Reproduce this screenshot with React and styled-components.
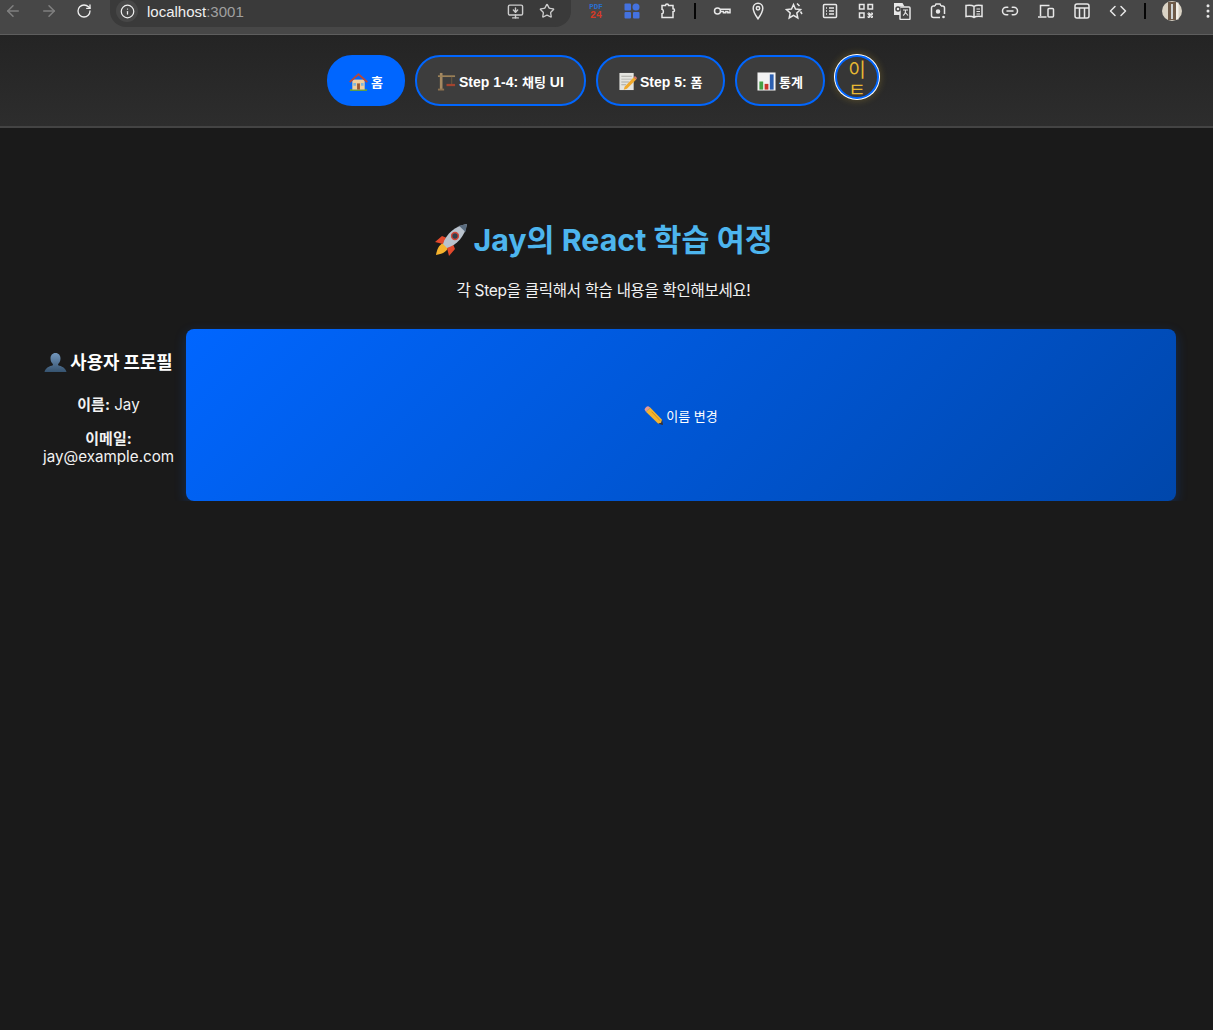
import React from "react";
import styled, { createGlobalStyle } from "styled-components";
import {
  ArrowLeft,
  ArrowRight,
  RotateCw,
  Info,
  MonitorDown,
  Star,
  Link2,
  Code,
  EllipsisVertical,
} from "lucide-react";

const GlobalStyle = createGlobalStyle`
  html, body {
    margin: 0;
    padding: 0;
    background: #1a1a1a;
  }
  body {
    font-family: Inter, "Noto Sans CJK KR", sans-serif;
    color: #fff;
  }
`;

// Emoji drawings, no colour emoji font is installed
const HouseEmoji = () => (
  <Emoji viewBox="0 0 20 20">
    <path d="M1 18h18v2H1z" fill="#5f9e45" />
    <path d="M3.500 8h13v10.500h-13z" fill="#efcf9f" />
    <path d="M0 10 10 1l10 9-1.500 1.300L10 3.800 1.500 11.300z" fill="#b5483a" />
    <path d="M8.500 12h3v6.500h-3z" fill="#9a5a34" />
    <path d="M4.600 11.500h2.800v3H4.600zM12.600 11.500h2.800v3h-2.800z" fill="#7fb6dc" />
  </Emoji>
);

const CraneEmoji = () => (
  <Emoji viewBox="0 0 20 20">
    <path d="M3 1h2.800v17H3z" fill="#a68a62" />
    <path d="M1 17.500h6.500v2H1z" fill="#8c7250" />
    <path d="M1 3.500h18v1.800H1z" fill="#9c8258" />
    <path d="M15 5h1v7.500h-1z" fill="#6d5a40" />
    <path d="M10 12.500h9v2.400h-9z" fill="#a4442f" />
  </Emoji>
);

const MemoEmoji = () => (
  <Emoji viewBox="0 0 20 20">
    <path d="M1.500 1h15v18h-15z" fill="#e4e4df" />
    <path d="M3.500 4h11v1h-11zM3.500 7h11v1h-11zM3.500 10h8v1h-8zM3.500 13h5v1h-5z" fill="#a9a9a4" />
    <path d="m7 15.500 9.600-10 2.600 2.400-9.800 9.800-3.400 1z" fill="#f0a92c" />
    <path d="m16.600 5.500 1.300-1.300 2.100 2.200-.8 1.500z" fill="#e07a70" />
  </Emoji>
);

const ChartEmoji = () => (
  <Emoji viewBox="0 0 20 20">
    <path d="M.5.500h19v19H.5z" fill="#f2f2f2" />
    <path d="M2.500 10h4v8.500h-4z" fill="#45a045" />
    <path d="M8 12.500h4v6H8z" fill="#c8352b" />
    <path d="M13.500 2.500h4v16h-4z" fill="#2c5fb0" />
  </Emoji>
);

const RocketEmoji = () => (
  <Emoji $size={34} viewBox="0 0 34 34">
    <path d="M2 32c1-6 3-10 7-12l5 5c-2 4-6 6-12 7z" fill="#f6b32d" />
    <path d="M8 13 1 19l8 2 4-6zM21 26l-6 7-2-8 6-4z" fill="#e2492c" />
    <path d="M9 21C12 11 21 3 33 1c-2 12-10 21-20 24z" fill="#b9c2cc" />
    <path d="M25 2.700 33 1l-1.500 8z" fill="#5b6d80" />
    <circle cx="21" cy="13" r="3.400" fill="#33404d" stroke="#d4473a" strokeWidth="1.500" />
  </Emoji>
);

const BustEmoji = () => (
  <Emoji $size={23} viewBox="0 0 23 23">
    <defs>
      <linearGradient id="bust" x1="0" y1="0" x2="0" y2="1">
        <stop offset="0" stopColor="#7397bd" />
        <stop offset="1" stopColor="#36536f" />
      </linearGradient>
    </defs>
    <path
      d="M11.500 1c3.200 0 5 2.400 5 5.500 0 2.400-1 4.400-2.400 5.400v1.400c3.400 1 7.400 2.400 8.400 6.700H.5c1-4.300 5-5.700 8.400-6.700v-1.400C7.500 10.900 6.500 8.900 6.500 6.500 6.500 3.400 8.300 1 11.500 1z"
      fill="url(#bust)"
    />
  </Emoji>
);

const PencilEmoji = () => (
  <Emoji $size={19} viewBox="0 0 20 20">
    <path d="M6.500 1.500 19 14.500l-.8 3-3.200 1.200L2 6z" fill="#f3b32f" />
    <path d="M8 6 17 15.500" stroke="#c98a1c" strokeWidth="1" />
    <path d="M2 6 6.500 1.500 4.500.3C3 0 .6 2.200.7 4z" fill="#e89a92" />
    <path d="m15 18.700 3.200-1.200.8-3 1 5.500z" fill="#3b2f28" />
  </Emoji>
);

// Toolbar extension icons
const PdfBadge = () => (
  <svg width="18" height="18" viewBox="0 0 18 18">
    <text x="9" y="7" textAnchor="middle" fontSize="7.5" fontWeight="700" fontFamily="Liberation Mono, monospace" fill="#2a6fd0">PDF</text>
    <text x="9" y="15.500" textAnchor="middle" fontSize="10" fontWeight="700" fontFamily="Liberation Mono, monospace" fill="#d63a25">24</text>
  </svg>
);

const TileIcon = () => (
  <svg width="16" height="16" viewBox="0 0 16 16" fill="#4472e0">
    <rect x="0.500" y="0.500" width="6.500" height="7" rx="1" />
    <circle cx="12" cy="4" r="3.500" />
    <rect x="0.500" y="9" width="6.500" height="6.500" rx="1" />
    <rect x="9" y="9" width="6.500" height="6.500" rx="1" />
  </svg>
);

const PuzzleIcon = () => (
  <ToolIcon viewBox="0 0 18 18">
    <path d="M3 3.500h3.500c0-2 3-2 3 0H14v3.300c2 0 2 3 0 3v5.700H3v-3.700c1.800 0 1.800-4.500 0-4.500z" />
  </ToolIcon>
);

const KeyIcon = () => (
  <ToolIcon viewBox="0 0 18 18">
    <circle cx="4.500" cy="9" r="3" />
    <path d="M7.500 7.300H17v3.400h-2.200V9.500h-2v1.200H10.500V9.500H8" />
  </ToolIcon>
);

const PinIcon = () => (
  <ToolIcon viewBox="0 0 18 18">
    <path d="M9 1.200c2.900 0 4.800 2.200 4.800 5C13.800 10 9 16.800 9 16.800S4.200 10 4.200 6.200c0-2.800 1.900-5 4.800-5z" />
    <circle cx="9" cy="6.300" r="1.700" />
  </ToolIcon>
);

const StarSparkIcon = () => (
  <ToolIcon viewBox="0 0 18 18">
    <path d="M8.500 2.500 10.500 7l5 .5-3.700 3.400 1 5-4.300-2.500-4.300 2.500 1-5L1.500 7.500l5-.5z" />
    <path d="M12 1.500 14.500 4M15.500 9.500 17 12" />
  </ToolIcon>
);

const ListBoxIcon = () => (
  <ToolIcon viewBox="0 0 18 18">
    <rect x="2.500" y="2.500" width="13" height="13" rx="1" />
    <path d="M5 6h1M8 6h5M5 9h1M8 9h5M5 12h1M8 12h5" />
  </ToolIcon>
);

const QrIcon = () => (
  <ToolIcon viewBox="0 0 18 18">
    <rect x="2.500" y="2.500" width="4.500" height="4.500" />
    <rect x="11" y="2.500" width="4.500" height="4.500" />
    <rect x="2.500" y="11" width="4.500" height="4.500" />
    <path d="M11 11h1.500v1.500H11zM14 11h1.500v1.500H14zM12.500 12.500H14V14h-1.500zM11 14h1.500v1.500H11zM14 14h1.500v1.500H14z" strokeWidth="1" />
  </ToolIcon>
);

const TranslateIcon = () => (
  <ToolIcon viewBox="0 0 18 18">
    <rect x="7" y="5" width="10" height="12.500" rx="1" />
    <path d="M1 1h8.500l2 3.500H7V13H1z" fill="#e8e8e8" stroke="none" />
    <circle cx="5" cy="7" r="2" stroke="#474747" />
    <path d="M10 8h5M12.500 8c0 3-1.500 5-2.500 5.500M12 10l3 3.500" strokeWidth="1.100" />
  </ToolIcon>
);

const LensIcon = () => (
  <ToolIcon viewBox="0 0 18 18">
    <path d="M6 4H4.500a2 2 0 0 0-2 2v7.500a2 2 0 0 0 2 2H11M12 4h1.500a2 2 0 0 1 2 2v6" />
    <path d="M6 4l1-2h4l1 2" />
    <circle cx="9" cy="9.500" r="1.500" fill="#e8e8e8" />
    <circle cx="14.500" cy="15" r="1.300" fill="#e8e8e8" stroke="none" />
  </ToolIcon>
);

const BookIcon = () => (
  <ToolIcon viewBox="0 0 18 18">
    <path d="M9 4.500C7.500 3.200 4 3 1 3.500v11c3-.5 6.500-.3 8 1 1.500-1.300 5-1.500 8-1v-11c-3-.5-6.500-.3-8 1zM9 4.500v11" />
    <path d="M11.500 7H15M11.500 9.500H15M11.500 12H15" strokeWidth="1.100" />
  </ToolIcon>
);

const DevicesIcon = () => (
  <ToolIcon viewBox="0 0 18 18">
    <path d="M3.500 14V3.500h9M1 15h8.500" />
    <rect x="11" y="6.500" width="5.500" height="8.500" rx="1" />
  </ToolIcon>
);

const LayoutIcon = () => (
  <ToolIcon viewBox="0 0 18 18">
    <rect x="2" y="2" width="14" height="14" rx="2" />
    <path d="M2 6h14M6.500 6v10M11.500 6v10" />
  </ToolIcon>
);

const Avatar = () => (
  <svg width="20" height="20" viewBox="0 0 20 20">
    <circle cx="10" cy="10" r="10" fill="#d9d2c4" />
    <path d="M6 1h8v18H6z" fill="#6e5a48" />
    <path d="M9 3h2v15H9z" fill="#cfd4d6" />
    <path d="M14 1.500h2.500v17H14z" fill="#f2efe8" />
  </svg>
);

const Ko = styled.span`
  font-size: 13px;
`;

const tabs = [
  { id: "home", label: <Ko>홈</Ko>, icon: <HouseEmoji />, active: true },
  { id: "chat", label: <>Step 1-4: <Ko>채팅</Ko> UI</>, icon: <CraneEmoji />, minWidth: 171 },
  { id: "form", label: <>Step 5: <Ko>폼</Ko></>, icon: <MemoEmoji />, minWidth: 129 },
  { id: "stats", label: <Ko>통계</Ko>, icon: <ChartEmoji />, minWidth: 90 },
];

const App = () => {
  return (
    <>
      <GlobalStyle />
      <BrowserBar>
        <NavIcons>
          <ArrowLeft size={18} color="#808080" />
          <ArrowRight size={18} color="#808080" />
          <RotateCw size={16} color="#eee" />
        </NavIcons>
        <AddressBar>
          <InfoBadge>
            <Info size={15} color="#eee" />
          </InfoBadge>
          <Url>
            localhost<span>:3001</span>
          </Url>
          <AddressActions>
            <MonitorDown size={17} color="#ccc" />
            <Star size={16} color="#ccc" />
          </AddressActions>
        </AddressBar>
        <Extensions>
          <Slot><PdfBadge /></Slot>
          <Slot><TileIcon /></Slot>
          <Slot><PuzzleIcon /></Slot>
          <Divider />
          <Slot><KeyIcon /></Slot>
          <Slot><PinIcon /></Slot>
          <Slot><StarSparkIcon /></Slot>
          <Slot><ListBoxIcon /></Slot>
          <Slot><QrIcon /></Slot>
          <Slot><TranslateIcon /></Slot>
          <Slot><LensIcon /></Slot>
          <Slot><BookIcon /></Slot>
          <Slot><Link2 size={18} /></Slot>
          <Slot><DevicesIcon /></Slot>
          <Slot><LayoutIcon /></Slot>
          <Slot><Code size={18} /></Slot>
          <Divider />
          <Slot><Avatar /></Slot>
          <Slot><EllipsisVertical size={18} /></Slot>
        </Extensions>
      </BrowserBar>

      <Nav>
        {tabs.map((tab) => (
          <NavButton key={tab.id} $active={tab.active} $minWidth={tab.minWidth}>
            {tab.icon}
            <span>{tab.label}</span>
          </NavButton>
        ))}
        <LangButton>
          <LangGlyph>이</LangGlyph>
          <LangGlyph>ㅌ</LangGlyph>
        </LangButton>
      </Nav>

      <Header>
        <Title>
          <RocketEmoji />
          Jay의 React 학습 여정
        </Title>
        <Subtitle>각 Step을 클릭해서 학습 내용을 확인해보세요!</Subtitle>
      </Header>

      <Content>
        <Profile>
          <ProfileTitle>
            <BustEmoji />
            사용자 프로필
          </ProfileTitle>
          <ProfileLine>
            <strong>이름:</strong> Jay
          </ProfileLine>
          <ProfileLine>
            <strong>이메일:</strong> jay@example.com
          </ProfileLine>
        </Profile>
        <ChangeButton>
          <PencilEmoji />
          이름 변경
        </ChangeButton>
      </Content>
    </>
  );
};

const Emoji = styled.svg`
  flex: none;
  width: ${(p) => p.$size || 19}px;
  height: ${(p) => p.$size || 19}px;
`;

const ToolIcon = styled.svg`
  width: 18px;
  height: 18px;
  fill: none;
  stroke: #e8e8e8;
  stroke-width: 1.5;
`;

const BrowserBar = styled.div`
  height: 34px;
  display: flex;
  align-items: flex-start;
  background: #474747;
  border-bottom: 1px solid #5e5e5e;
  overflow: hidden;
`;

const NavIcons = styled.div`
  display: flex;
  align-items: center;
  gap: 18px;
  height: 22px;
  padding-left: 4px;
  width: 110px;
  flex: none;
  box-sizing: border-box;
`;

const AddressBar = styled.div`
  width: 461px;
  height: 27px;
  display: flex;
  align-items: center;
  background: #3a3a3a;
  border-radius: 0 0 16px 16px;
  flex: none;
  padding: 0 16px 5px 6px;
  box-sizing: border-box;
`;

const InfoBadge = styled.span`
  width: 22px;
  height: 22px;
  border-radius: 50%;
  background: #474747;
  display: flex;
  align-items: center;
  justify-content: center;
`;

const Url = styled.span`
  margin-left: 9px;
  font: 15px "Liberation Sans", sans-serif;
  color: #f0f0f0;
  span {
    color: #a0a0a0;
  }
`;

const AddressActions = styled.div`
  margin-left: auto;
  display: flex;
  align-items: center;
  gap: 15px;
`;

const Extensions = styled.div`
  display: flex;
  align-items: center;
  height: 22px;
  padding-left: 7px;
  color: #e8e8e8;
  flex: none;
`;

const Slot = styled.span`
  width: 36px;
  display: flex;
  align-items: center;
  justify-content: center;
  flex: none;
`;

const Divider = styled.span`
  width: 2px;
  height: 16px;
  margin: 0 8px;
  background: #050505;
  flex: none;
`;

const Nav = styled.nav`
  height: 93px;
  display: flex;
  justify-content: center;
  align-items: flex-start;
  gap: 10px;
  padding: 20px 7px 0 0;
  box-sizing: border-box;
  background: linear-gradient(180deg, #242424, #2d2d2d);
  border-bottom: 2px solid #444;
`;

const NavButton = styled.button`
  height: 51px;
  min-width: ${(p) => p.$minWidth || 0}px;
  padding: 1px 20px 0;
  display: flex;
  align-items: center;
  gap: 3px;
  border-radius: 25px;
  border: 2px solid #0066ff;
  background: ${(p) => (p.$active ? "#0066ff" : "#3d3d3d")};
  color: #fff;
  font: 700 14px "Liberation Sans", "Noto Sans CJK KR", sans-serif;
  white-space: nowrap;
`;

const LangButton = styled.button`
  width: 44px;
  height: 44px;
  padding: 2px 0 0;
  display: flex;
  flex-direction: column;
  align-items: center;
  border-radius: 50%;
  border: 2px solid #0066ff;
  background: #363636;
  color: #e6b833;
  font-family: "Noto Sans CJK KR", sans-serif;
  box-shadow: 0 0 0 1px #fff, 0 0 7px 2px rgba(241, 194, 50, 0.22);
`;

const LangGlyph = styled.span`
  font-size: 19px;
  line-height: 20px;
`;

const Header = styled.header`
  padding: 90px 6px 0 0;
  display: flex;
  flex-direction: column;
  align-items: center;
`;

const Title = styled.h1`
  margin: 0;
  display: flex;
  align-items: center;
  gap: 5px;
  font-size: 30.4px;
  line-height: 44px;
  font-weight: 700;
  color: #4db5ee;
`;

const Subtitle = styled.p`
  margin: 17px 0 0;
  font-size: 15.5px;
  letter-spacing: -0.3px;
  line-height: 24px;
  color: #f2f2f2;
`;

const Content = styled.div`
  margin: 26px 37px 0 43px;
  display: flex;
  gap: 12px;
`;

const Profile = styled.aside`
  width: 131px;
  flex: none;
  text-align: center;
  padding-top: 22px;
`;

const ProfileTitle = styled.h3`
  margin: 0 0 21px;
  font-size: 17.8px;
  line-height: 24px;
  font-weight: 700;
  white-space: nowrap;
  display: flex;
  align-items: center;
  justify-content: center;
  gap: 3px;
`;

const ProfileLine = styled.p`
  margin: 0 0 16px;
  font-size: 15.2px;
  line-height: 18px;
  color: #f2f2f2;
  strong {
    font-weight: 700;
    font-size: 15px;
  }
`;

const ChangeButton = styled.button`
  flex: 1;
  height: 172px;
  display: flex;
  align-items: center;
  justify-content: center;
  gap: 3px;
  border: none;
  border-radius: 8px;
  background: linear-gradient(135deg, #0066ff, #0047ab);
  box-shadow: 0 4px 12px rgba(0, 102, 255, 0.25);
  color: #fff;
  font: 400 13px Inter, "Noto Sans CJK KR", sans-serif;
`;

export default App;
